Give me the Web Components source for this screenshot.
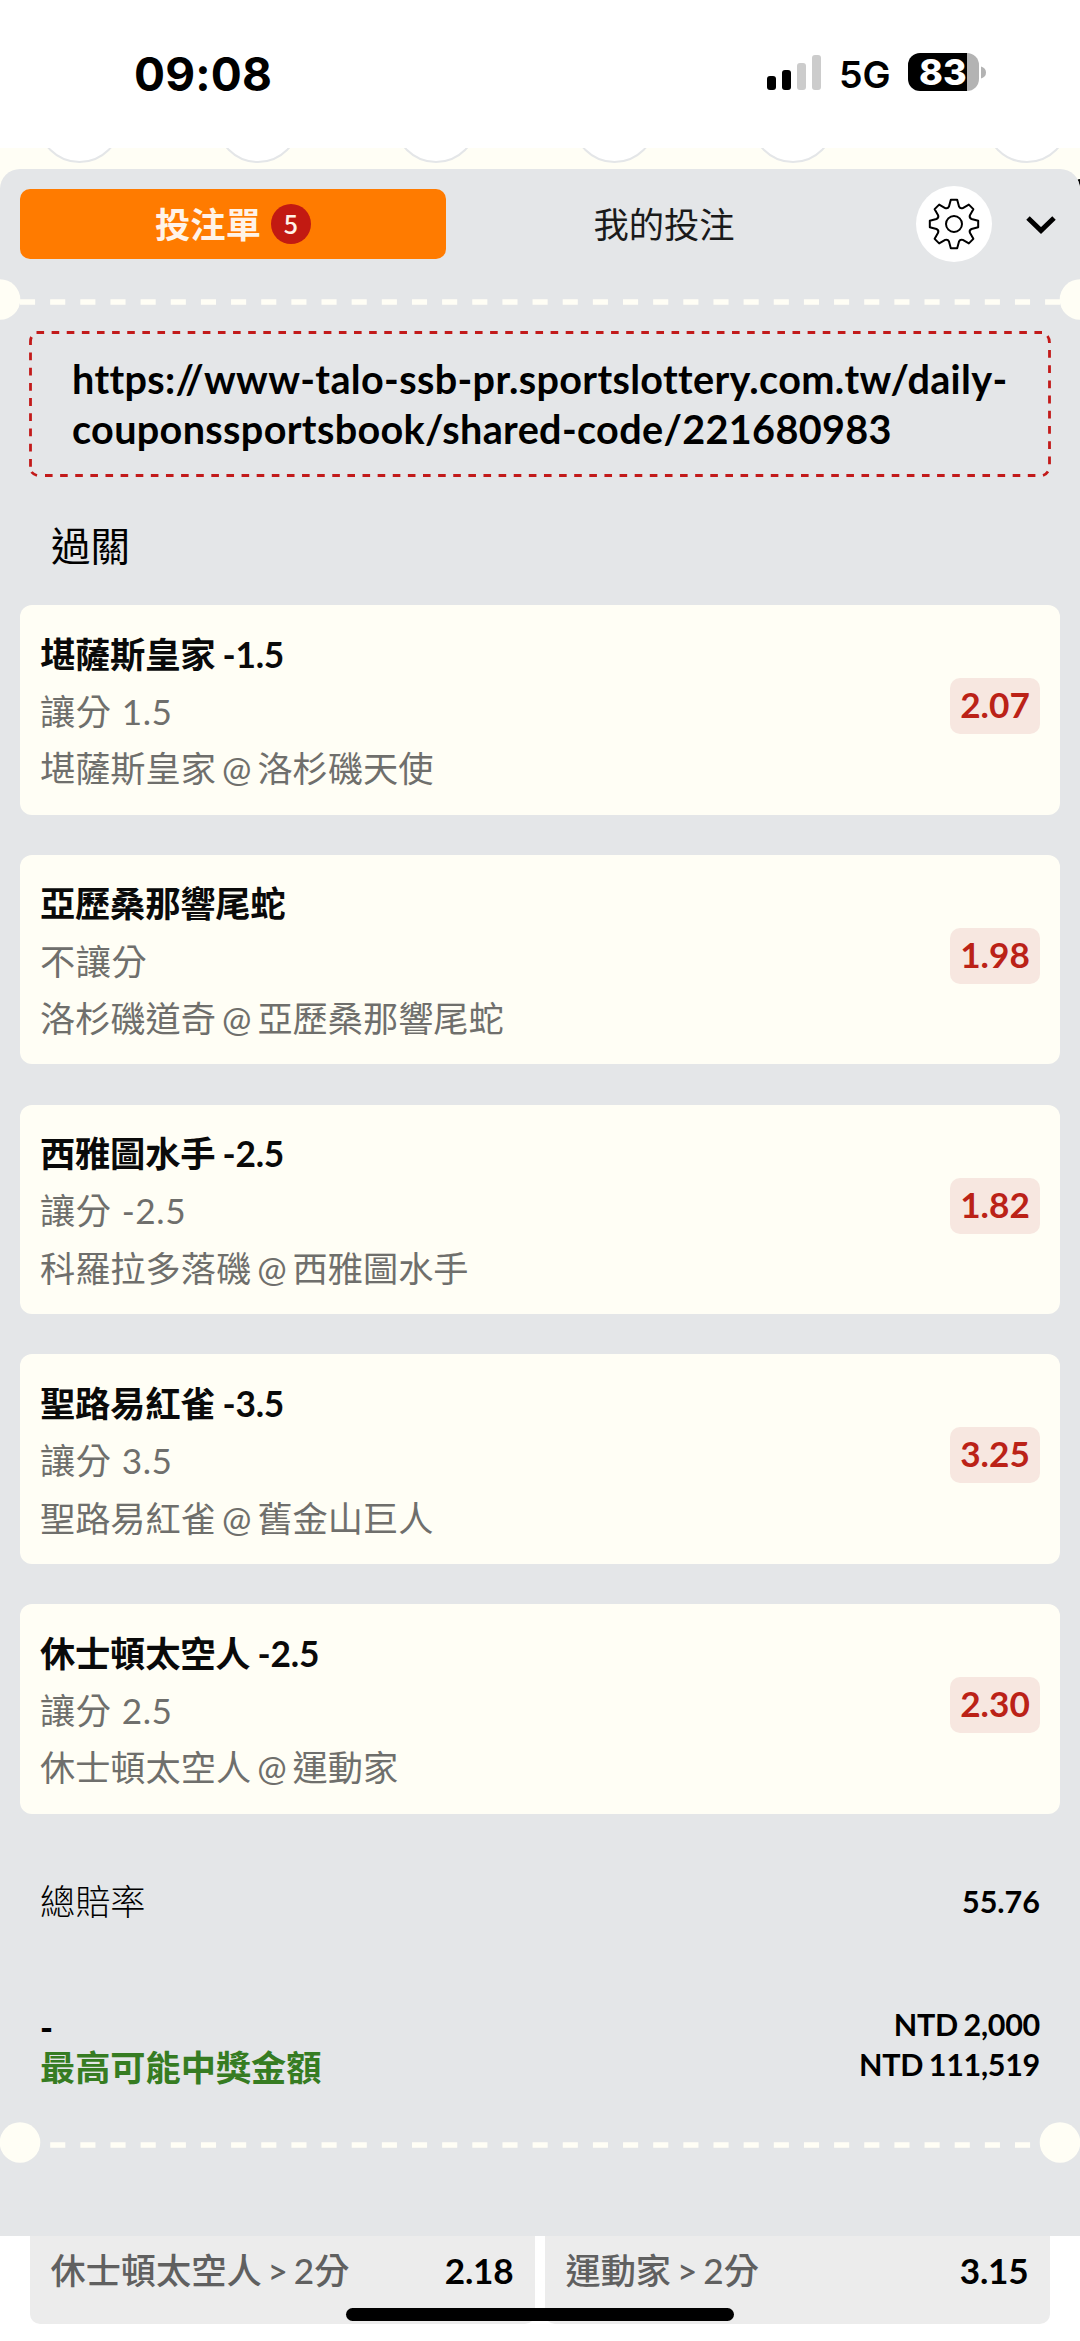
<!DOCTYPE html>
<html lang="zh-Hant">
<head>
<meta charset="utf-8">
<title>投注單</title>
<style>
  body {
    margin: 0;
    width: 1080px;
    height: 2341px;
    overflow: hidden;
    background: #fff;
    color: #000;
    font-family: Lato, "Noto Sans CJK TC", sans-serif;
  }
</style>
</head>
<body>
<bet-app></bet-app>

<script>
class StatusBar extends HTMLElement {
  constructor() {
    super();
    this.attachShadow({ mode: 'open' });
  }

  connectedCallback() {
    this.shadowRoot.innerHTML = `
      <style>
        :host {
          display: flex;
          justify-content: space-between;
          height: 148px;
          box-sizing: border-box;
          padding: 46px 94px 0 134px;
          background: #fff;
          font-family: Inter, sans-serif;
        }
        .time {
          font-size: 46px;
          line-height: 56px;
          font-weight: 700;
          letter-spacing: 0.2px;
        }
        .right {
          display: flex;
          align-items: flex-start;
        }
        .signal { margin: 9px 17px 0 0; }
        .net {
          width: 69px;
          font-size: 37.5px;
          line-height: 57px;
          font-weight: 600;
        }
        .battery {
          width: 71px;
          height: 38px;
          margin-top: 7px;
          border-radius: 12px;
          background: linear-gradient(90deg, #000 59px, #b3b3b3 59px);
          color: #fff;
          font-size: 36px;
          font-weight: 800;
          line-height: 39px;
          text-indent: 11px;
        }
        .nub { margin: 20px 0 0 2px; }
      </style>
      <div class="time">${this.getAttribute('time')}</div>
      <div class="right">
        <svg class="signal" width="55" height="35">
          <rect x="0" y="21" width="9" height="14" rx="3"/>
          <rect x="15" y="15" width="9" height="20" rx="3"/>
          <rect x="30" y="8" width="9" height="27" rx="3" fill="#ccc"/>
          <rect x="45" y="0" width="9" height="35" rx="3" fill="#ccc"/>
        </svg>
        <div class="net">5G</div>
        <div class="battery">${this.getAttribute('battery')}</div>
        <svg class="nub" width="5" height="13"><path d="M0 0.5Q5 2 5 6.500T0 12.500Z" fill="#b3b3b3"/></svg>
      </div>
    `;
  }
}
customElements.define('status-bar', StatusBar);

// bottom edge of the sport menu that stays visible above the slip
class SportStrip extends HTMLElement {
  constructor() {
    super();
    this.attachShadow({ mode: 'open' });
  }

  connectedCallback() {
    const centers = [79.5, 258, 436, 614.5, 793, 1027];
    this.shadowRoot.innerHTML = `
      <style>
        :host { display: block; height: 41px; background: #fffef5; margin-bottom: -20px; }
        svg { display: block; }
      </style>
      <svg width="1080" height="41">
        ${centers.map(x => `<circle cx="${x}" cy="-27" r="41" fill="#fff" stroke="#e4e6e8" stroke-width="2"/>`).join('')}
        <path d="M1077.500 31.500L1080 31V39Z"/>
      </svg>
    `;
  }
}
customElements.define('sport-strip', SportStrip);

class SlipTabs extends HTMLElement {
  constructor() {
    super();
    this.attachShadow({ mode: 'open' });
  }

  gearPath() {
    // eight teeth, each one: flank, top, flank, rounded valley
    const point = (r, deg) => {
      const a = (deg - 90) * Math.PI / 180;
      return `${(38 + r * Math.cos(a)).toFixed(2)} ${(38 + r * Math.sin(a)).toFixed(2)}`;
    };
    let d = '';
    for (let i = 0; i < 8; i++) {
      const a = i * 45;
      d += `${i ? 'L' : 'M'}${point(18.2, a - 16)}L${point(24.4, a - 7.5)}L${point(24.4, a + 7.5)}L${point(18.2, a + 16)}Q${point(16.2, a + 22.5)} ${point(18.2, a + 29)}`;
    }
    return d + 'Z';
  }

  connectedCallback() {
    this.shadowRoot.innerHTML = `
      <style>
        :host {
          display: flex;
          height: 70px;
          padding: 20px 20px 0;
          font-size: 35.3px;
          font-family: "Noto Sans CJK TC", sans-serif;
          align-items: center;
        }
        .tab {
          width: 426px;
          height: 70px;
          display: flex;
          align-items: center;
          justify-content: center;
          box-sizing: border-box;
        }
        .label { margin-top: -4px; }
        .active {
          background: #ff7b00;
          color: #fff3e8;
          border-radius: 10px;
          font-weight: 700;
        }
        .other { width: 436px; color: #1a1a1a; }
        .count {
          width: 40px;
          height: 40px;
          margin-left: 10px;
          border-radius: 50%;
          background: #c21a12;
          color: #fff3e8;
          font-size: 25px;
          font-weight: 500;
          line-height: 39px;
          text-align: center;
        }
        .gear {
          width: 76px;
          height: 76px;
          margin-left: 34px;
          border-radius: 50%;
          background: #fff;
          flex: none;
        }
        .chevron { margin-left: 33px; flex: none; }
        path, circle { fill: none; stroke: #000; }
      </style>
      <div class="tab active"><span class="label">投注單</span><span class="count">${this.getAttribute('count')}</span></div>
      <div class="tab other"><span class="label">我的投注</span></div>
      <svg class="gear" viewBox="0 0 76 76">
        <path d="${this.gearPath()}" stroke-width="2" stroke-linejoin="round"/>
        <circle cx="38" cy="38" r="8" stroke-width="2"/>
      </svg>
      <svg class="chevron" width="32" height="20"><path d="M3 4L16 16.500L29 4" stroke-width="5"/></svg>
    `;
  }
}
customElements.define('slip-tabs', SlipTabs);

class TicketDivider extends HTMLElement {
  constructor() {
    super();
    this.attachShadow({ mode: 'open' });
  }

  connectedCallback() {
    const inside = this.hasAttribute('inside');
    const cx = inside ? 20 : 0;
    const from = inside ? 50.2 : 20;
    this.shadowRoot.innerHTML = `
      <style>
        :host { display: block; height: 41px; }
        svg { display: block; fill: #fffef5; }
      </style>
      <svg width="1080" height="41">
        <line x1="${from}" y1="23" x2="${1080 - from + 0.5}" y2="23" stroke="#fffef5" stroke-width="5.4" stroke-dasharray="15.1 15.050"/>
        <circle cx="${cx}" cy="20.500" r="20.3"/>
        <circle cx="${1080 - cx}" cy="20.500" r="20.3"/>
      </svg>
    `;
  }
}
customElements.define('ticket-divider', TicketDivider);

class ShareLink extends HTMLElement {
  constructor() {
    super();
    this.attachShadow({ mode: 'open' });
  }

  connectedCallback() {
    this.shadowRoot.innerHTML = `
      <style>
        :host {
          display: block;
          position: relative;
          margin: 11px 29px 0;
          height: 146px;
          box-sizing: border-box;
          padding: 23px 0 0 43px;
          font-size: 39.6px;
          line-height: 50.3px;
          font-weight: 700;
          letter-spacing: 0.34px;
          white-space: nowrap;
        }
        svg {
          position: absolute;
          left: 0;
          top: 0;
          fill: none;
          stroke: #c21a1a;
          stroke-width: 2.8;
        }
      </style>
      <svg width="1022" height="146">
        <path d="M7.500 1.500H1013" stroke-dasharray="7.6 7.52"/>
        <path d="M16 144.500H1008" stroke-dasharray="7.6 7.52"/>
        <path d="M1.500 21.500V136" stroke-dasharray="7.8 7.4"/>
        <path d="M1020.500 19V136" stroke-dasharray="7.8 7.4"/>
        <path d="M1.500 14V10.500Q1.500 8 2.500 6M1018.500 5Q1020.500 7.500 1020.500 12M2.500 141Q4.500 143.500 8 144.500M1014 144.500Q1017 143.500 1019 140.500"/>
      </svg>
      <slot></slot>
    `;
  }
}
customElements.define('share-link', ShareLink);

class BetCard extends HTMLElement {
  constructor() {
    super();
    this.attachShadow({ mode: 'open' });
  }

  connectedCallback() {
    this.shadowRoot.innerHTML = `
      <style>
        :host {
          display: flex;
          justify-content: space-between;
          align-items: flex-start;
          height: 209.5px;
          box-sizing: border-box;
          padding: 20.5px 20px 0 20px;
          border-radius: 12px;
          background: #fffef5;
          font-size: 35.2px;
          line-height: 57.4px;
        }
        .pick {
          color: #0a0a0a;
          font-size: 35.3px;
          font-weight: 700;
          letter-spacing: -0.25px;
          word-spacing: -1px;
        }
        .market { color: #6f6f6c; letter-spacing: 0.6px; word-spacing: 0.5px; }
        .match { color: #6f6f6c; word-spacing: -3px; }
        .odds {
          width: 90px;
          height: 56px;
          margin-top: 52.5px;
          border-radius: 10px;
          background: #f7e7e0;
          color: #bb2217;
          font-weight: 700;
          line-height: 53px;
          text-align: center;
        }
      </style>
      <div>
        <div class="pick">${this.getAttribute('pick')}</div>
        <div class="market">${this.getAttribute('market')}</div>
        <div class="match">${this.getAttribute('match')}</div>
      </div>
      <div class="odds">${this.getAttribute('odds')}</div>
    `;
  }
}
customElements.define('bet-card', BetCard);

class SlipTotals extends HTMLElement {
  constructor() {
    super();
    this.attachShadow({ mode: 'open' });
  }

  connectedCallback() {
    this.shadowRoot.innerHTML = `
      <style>
        :host {
          display: block;
          height: 308.5px;
          box-sizing: border-box;
          padding: 1.5px 40px 0;
        }
        .row {
          display: flex;
          justify-content: space-between;
          align-items: center;
          height: 40px;
          line-height: 40px;
        }
        .first { padding-top: 66px; padding-bottom: 83px; }
        .label { font-size: 35.2px; font-weight: 300; }
        .dash { font-size: 35px; font-weight: 900; padding-top: 3px; }
        .win { font-weight: 700; color: #367c22; padding-top: 5px; }
        .value { font-size: 30.500px; font-weight: 700; }
        .money { letter-spacing: -0.3px; word-spacing: -1.4px; }
      </style>
      <div class="row first"><span class="label">總賠率</span><span class="value">${this.getAttribute('odds')}</span></div>
      <div class="row"><span class="dash">-</span><span class="value money">NTD ${this.getAttribute('stake')}</span></div>
      <div class="row"><span class="label win">最高可能中獎金額</span><span class="value money">NTD ${this.getAttribute('win')}</span></div>
    `;
  }
}
customElements.define('slip-totals', SlipTotals);

class OddsButton extends HTMLElement {
  constructor() {
    super();
    this.attachShadow({ mode: 'open' });
  }

  connectedCallback() {
    this.shadowRoot.innerHTML = `
      <style>
        :host {
          display: flex;
          flex: 1;
          justify-content: space-between;
          height: 88px;
          box-sizing: border-box;
          padding: 4px 21.5px 0 20.5px;
          border-radius: 0 0 10px 10px;
          background: #ececec;
          font-size: 35.2px;
          line-height: 60px;
        }
        .name { color: #606060; font-weight: 500; word-spacing: -3px; }
        .price { font-weight: 700; letter-spacing: -0.2px; }
      </style>
      <span class="name"><slot></slot></span>
      <span class="price">${this.getAttribute('price')}</span>
    `;
  }
}
customElements.define('odds-button', OddsButton);

class BetApp extends HTMLElement {
  constructor() {
    super();
    this.attachShadow({ mode: 'open' });
  }

  connectedCallback() {
    const bets = [
      { pick: '堪薩斯皇家 -1.5', market: '讓分 1.5', match: '堪薩斯皇家 @ 洛杉磯天使', odds: '2.07' },
      { pick: '亞歷桑那響尾蛇', market: '不讓分', match: '洛杉磯道奇 @ 亞歷桑那響尾蛇', odds: '1.98' },
      { pick: '西雅圖水手 -2.5', market: '讓分 -2.5', match: '科羅拉多落磯 @ 西雅圖水手', odds: '1.82' },
      { pick: '聖路易紅雀 -3.5', market: '讓分 3.5', match: '聖路易紅雀 @ 舊金山巨人', odds: '3.25' },
      { pick: '休士頓太空人 -2.5', market: '讓分 2.5', match: '休士頓太空人 @ 運動家', odds: '2.30' }
    ];
    this.shadowRoot.innerHTML = `
      <style>
        :host { display: block; position: relative; height: 2341px; }
        .slip {
          position: relative;
          height: 2067px;
          border-radius: 20px 20px 0 0;
          background: #e4e6e8;
        }
        ticket-divider.top { margin-top: 20px; }
        h2 {
          margin: 39px 0 29px 51px;
          height: 60px;
          font-size: 39.500px;
          line-height: 60px;
          font-weight: 400;
        }
        .bets {
          display: flex;
          flex-direction: column;
          gap: 40.25px;
          padding: 0 20px;
        }
        .behind {
          display: flex;
          gap: 10px;
          padding: 0 30px;
        }
        .home {
          position: absolute;
          left: 346px;
          top: 2308px;
          width: 388px;
          height: 13px;
          border-radius: 7px;
          background: #000;
        }
      </style>
      <status-bar time="09:08" battery="83"></status-bar>
      <sport-strip></sport-strip>
      <div class="slip">
        <slip-tabs count="5"></slip-tabs>
        <ticket-divider class="top"></ticket-divider>
        <share-link>https://www-talo-ssb-pr.sportslottery.com.tw/daily-<br>couponssportsbook/shared-code/221680983</share-link>
        <h2>過關</h2>
        <div class="bets">
          ${bets.map(b => `<bet-card pick="${b.pick}" market="${b.market}" match="${b.match}" odds="${b.odds}"></bet-card>`).join('')}
        </div>
        <slip-totals odds="55.76" stake="2,000" win="111,519"></slip-totals>
        <ticket-divider inside></ticket-divider>
      </div>
      <div class="behind">
        <odds-button price="2.18">休士頓太空人 &gt; 2分</odds-button>
        <odds-button price="3.15">運動家 &gt; 2分</odds-button>
      </div>
      <div class="home"></div>
    `;
  }
}
customElements.define('bet-app', BetApp);
</script>
</body>
</html>
